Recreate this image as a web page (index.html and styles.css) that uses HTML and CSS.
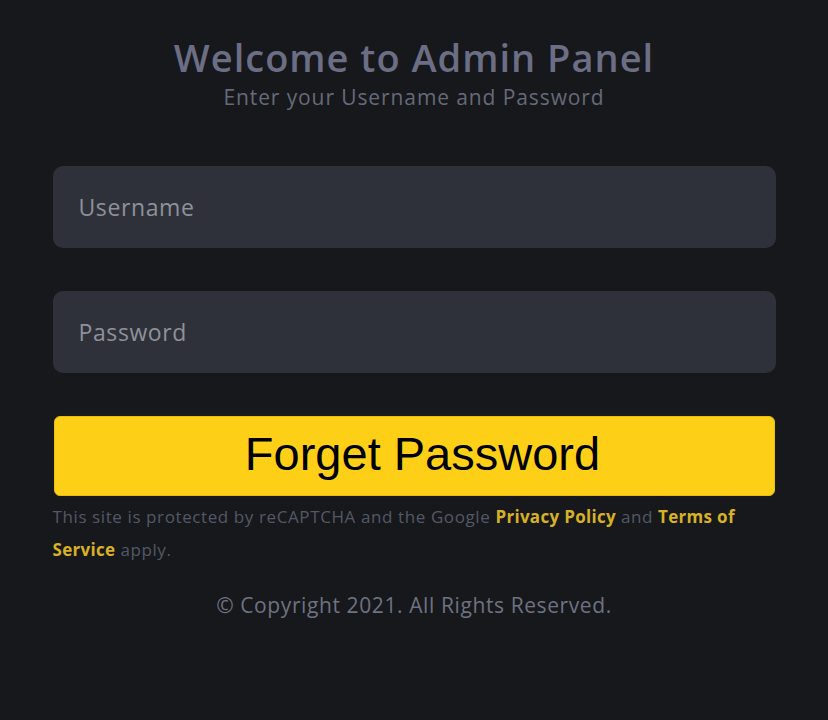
FILE: index.html
```html
<!DOCTYPE html>
<html lang="en">
<head>
<meta charset="utf-8">
<title>Admin Panel</title>
<link rel="stylesheet" href="styles.css">
</head>
<body>
<main class="panel">
  <header class="head">
    <h1 class="title">Welcome to Admin Panel</h1>
    <p class="subtitle">Enter your Username and Password</p>
  </header>
  <form class="form">
    <input class="field" type="text" placeholder="Username">
    <input class="field" type="password" placeholder="Password">
    <button class="btn" type="button">Forget Password</button>
  </form>
  <p class="notice"><span>This site is protected by reCAPTCHA and the Google</span> <a class="link" href="#">Privacy Policy</a> <span>and</span> <a class="link" href="#">Terms of</a> <a class="link" href="#">Service</a> <span>apply.</span></p>
  <p class="copy">© Copyright 2021. All Rights Reserved.</p>
</main>
</body>
</html>
```
FILE: styles.css
```css
html, body {
  margin: 0;
  padding: 0;
  background: #16181c;
  height: 100%;
}
body {
  font-family: "Open Sans", "Noto Sans", sans-serif;
}
.panel {
  width: 723px;
  margin: 0 auto;
  padding-top: 33px;
  display: flex;
  flex-direction: column;
}
.head {
  text-align: center;
}
.title {
  margin: 0;
  font-size: 38px;
  font-weight: 600;
  letter-spacing: 1px;
  color: #6b6e84;
  line-height: 48px;
}
.subtitle {
  margin: 3px 0 0;
  font-size: 21px;
  letter-spacing: 0.9px;
  color: #666a78;
  line-height: 26px;
}
.form {
  margin-top: 56px;
  display: flex;
  flex-direction: column;
  gap: 43px;
}
.field {
  box-sizing: border-box;
  height: 82px;
  width: 100%;
  border: none;
  border-radius: 10px;
  background: #2e3139;
  padding: 0 26px;
  font-family: "Open Sans", "Noto Sans", sans-serif;
  font-size: 23px;
  letter-spacing: 0.6px;
  color: #c8cad0;
  outline: none;
}
.field::placeholder {
  color: #8e9199;
}
.btn {
  box-sizing: border-box;
  height: 80px;
  margin: 0 1px;
  border: 1px solid #e8bd10;
  border-radius: 6px;
  background: #fdd017;
  font-family: "Liberation Sans", Arial, sans-serif;
  font-size: 47px;
  color: #000;
  cursor: pointer;
  padding: 0 0 5px 17px;
}
.notice {
  margin: 4px 0 0;
  font-size: 17px;
  letter-spacing: 0.6px;
  line-height: 33px;
  color: #545866;
}
.link {
  color: #d6b224;
  font-weight: 700;
  letter-spacing: 0.3px;
  text-decoration: none;
}
.copy {
  margin: 25px 0 0;
  text-align: center;
  font-size: 21px;
  letter-spacing: 0.6px;
  color: #6f7280;
}
```
